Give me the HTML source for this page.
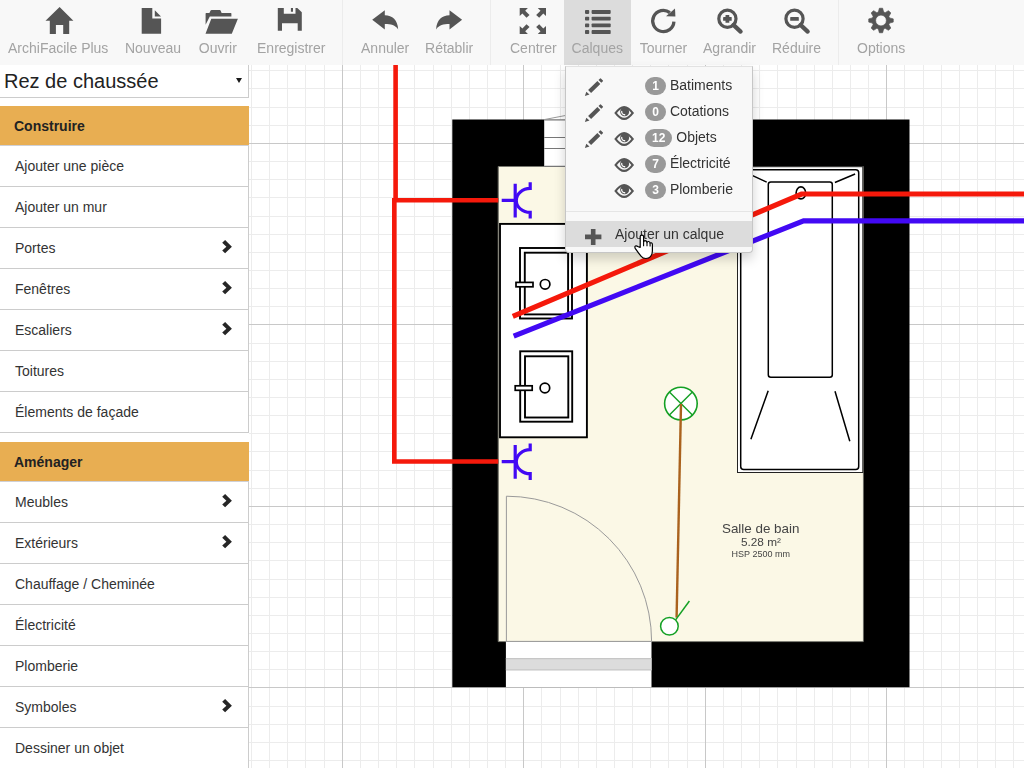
<!DOCTYPE html>
<html lang="fr"><head><meta charset="utf-8"><title>ArchiFacile Plus</title>
<style>
*{box-sizing:border-box}
html,body{margin:0;padding:0;width:1024px;height:768px;overflow:hidden;background:#fff;
 font-family:"Liberation Sans",Arial,sans-serif;font-size:14px;color:#333}
#canvas{position:absolute;left:0;top:0;width:1024px;height:768px;z-index:0}
#toolbar{position:absolute;left:0;top:0;width:1024px;height:65px;background:#f8f8f8;z-index:5}
.tb{position:absolute;top:0;height:65px;text-align:center;color:#a3a3a3;font-size:14px}
.tb span{position:absolute;left:0;right:0;top:39px;line-height:18px;white-space:nowrap}
.tb.active{background:#dcdcdc}
.sep{position:absolute;top:0;width:1px;height:65px;background:#ececec}
#tbicons{position:absolute;left:0;top:0;width:1024px;height:65px;z-index:6;pointer-events:none}
#sidebar{position:absolute;left:0;top:65px;width:249px;height:703px;background:#fff;z-index:4}
#floor{position:absolute;left:0;top:0;width:249px;height:33px;border-bottom:1px solid #ccc;border-right:1px solid #ccc;font-size:20px;line-height:32px;padding-left:4px;color:#222;white-space:nowrap}
#floor i{position:absolute;left:236px;top:13px;width:0;height:0;border-left:3px solid transparent;border-right:3px solid transparent;border-top:5.5px solid #1a1a1a}
.hd{position:absolute;left:0;width:249px;height:40px;background:#e8ae52;border-bottom:1px solid #cfd0d6;font-weight:bold;padding-left:14px;line-height:40px;color:#222}
.it{position:absolute;left:0;width:249px;height:41px;border-bottom:1px solid #ccc;border-right:1px solid #ccc;padding-left:15px;line-height:41px;color:#333;white-space:nowrap}
.it svg{position:absolute;left:222px;top:11.8px}
#dd{position:absolute;left:565px;top:66px;width:188px;height:187px;background:#f8f8f8;border:1px solid #c6c6c6;border-top-color:#e2e2e2;border-radius:0 0 4px 4px;box-shadow:0 6px 12px rgba(0,0,0,.175);z-index:7}
.row{position:absolute;left:0;width:186px;height:26px}
.row .badge{display:inline-block;vertical-align:middle;position:relative;top:0px;height:18px;min-width:21px;padding:0 7px;border-radius:10px;background:#999;color:#fff;font-weight:bold;font-size:12px;line-height:18px;text-align:center}
.row .nm{position:absolute;top:0;line-height:26px;color:#333;white-space:nowrap}
#ddline{position:absolute;left:0;top:144px;width:186px;height:1px;background:#e5e5e5}
#ddadd{position:absolute;left:0;top:154px;width:186px;height:26px;background:#dcdcdc}
#ddadd span{position:absolute;left:49px;top:0;line-height:26px;color:#333;white-space:nowrap}
#ddicons{position:absolute;left:0;top:0;width:186px;height:184px}
#canvas,.tb span,#dd .nm,#ddadd span{will-change:transform}
#cursor{position:absolute;left:633.2px;top:234.4px;z-index:9}
</style></head><body>

<svg id="canvas" width="1024" height="768" viewBox="0 0 1024 768">
<path d="M251.5 65V768M269.5 65V768M287.5 65V768M305.5 65V768M324.5 65V768M360.5 65V768M378.5 65V768M396.5 65V768M414.5 65V768M433.5 65V768M451.5 65V768M469.5 65V768M487.5 65V768M505.5 65V768M541.5 65V768M560.5 65V768M578.5 65V768M596.5 65V768M614.5 65V768M632.5 65V768M650.5 65V768M668.5 65V768M687.5 65V768M723.5 65V768M741.5 65V768M759.5 65V768M777.5 65V768M796.5 65V768M814.5 65V768M832.5 65V768M850.5 65V768M868.5 65V768M904.5 65V768M923.5 65V768M941.5 65V768M959.5 65V768M977.5 65V768M995.5 65V768M1013.5 65V768M249 70.5H1024M249 88.5H1024M249 107.5H1024M249 125.5H1024M249 161.5H1024M249 179.5H1024M249 197.5H1024M249 216.5H1024M249 234.5H1024M249 252.5H1024M249 270.5H1024M249 288.5H1024M249 306.5H1024M249 343.5H1024M249 361.5H1024M249 379.5H1024M249 397.5H1024M249 415.5H1024M249 433.5H1024M249 451.5H1024M249 470.5H1024M249 488.5H1024M249 524.5H1024M249 542.5H1024M249 560.5H1024M249 579.5H1024M249 597.5H1024M249 615.5H1024M249 633.5H1024M249 651.5H1024M249 669.5H1024M249 706.5H1024M249 724.5H1024M249 742.5H1024M249 760.5H1024" stroke="#ececec" stroke-width="1" fill="none"/>
<path d="M342.5 65V768M523.5 65V768M705.5 65V768M886.5 65V768M249 143.5H1024M249 324.5H1024M249 506.5H1024M249 687.5H1024" stroke="#c8c8c8" stroke-width="1" fill="none"/>
<!-- walls -->
<rect x="452.3" y="119.5" width="457.2" height="567.7" fill="#000"/>
<rect x="498.5" y="166.8" width="364.6" height="474.6" fill="#fbf8e6"/>
<path d="M498.2 166.5V641.6H863.4V166.5Z" fill="none" stroke="#8a8a80" stroke-width="0.8"/>
<!-- window in top wall -->
<rect x="544.2" y="119.5" width="207" height="47" fill="#fff"/>
<path d="M544.2 120H751M544.2 137.5H751M544.2 148.5H751M544.2 166.3H751" stroke="#777" stroke-width="1.2" fill="none"/>
<path d="M544.2 119.6L566 115.4" stroke="#999" stroke-width="1" fill="none"/>
<!-- door in bottom wall -->
<rect x="505.9" y="641.4" width="145.6" height="45.9" fill="#fff"/>
<rect x="505.9" y="658.3" width="145.6" height="11.8" fill="#dcdcdc"/>
<path d="M505.9 658.6H651.5M505.9 669.8H651.5" stroke="#c6c6c6" stroke-width="1.2"/>
<path d="M505.9 641.4H651.5" stroke="#999" stroke-width="1"/>
<path d="M506.4 641.4V496.2A145.2 145.2 0 0 1 651.6 641.4" fill="none" stroke="#9a9a9a" stroke-width="1"/>
<!-- vanity -->
<rect x="500" y="223.9" width="86.9" height="213.4" fill="#fff" stroke="#000" stroke-width="1.9"/>
<g fill="none" stroke="#000" stroke-width="1.9">
<rect x="520" y="248" width="52" height="70.5"/>
<rect x="524.8" y="252.7" width="43.3" height="61.7"/>
<rect x="520.2" y="351.3" width="52" height="70.4"/>
<rect x="525" y="356.3" width="43.3" height="61.2"/>
</g>
<g fill="#fff" stroke="#000" stroke-width="1.7">
<rect x="516" y="282.4" width="17" height="4.4"/>
<circle cx="545.1" cy="284.3" r="4.8"/>
<rect x="515.2" y="385.8" width="17" height="4.5"/>
<circle cx="544.9" cy="388" r="4.8"/>
</g>
<!-- bathtub -->
<rect x="737.5" y="166.7" width="125.3" height="305.8" fill="#fff" stroke="#222" stroke-width="1"/>
<rect x="740.7" y="169.8" width="118" height="299.8" rx="3" fill="none" stroke="#000" stroke-width="1.5"/>
<rect x="768.3" y="182" width="64" height="195.3" rx="2.5" fill="none" stroke="#000" stroke-width="1.5"/>
<path d="M752.1 175.4L766.7 182.1M834.9 182.5L855.1 174M768.2 390.8L750.9 439.2M835 391.3L849.8 441.3" stroke="#000" stroke-width="1.5" fill="none"/>
<ellipse cx="800.9" cy="192.9" rx="4.8" ry="6" fill="none" stroke="#000" stroke-width="1.6"/>
<!-- electric wires (red) -->
<path d="M395.6 65V200.3M394.3 198V461.5H498.3M392 200.3H498.3" fill="none" stroke="#f5190b" stroke-width="4.6" stroke-linejoin="miter"/>
<!-- sockets -->
<g fill="none" stroke="#4209f4" stroke-width="3.2">
<path d="M501.7 200.4H515.2M515.2 183.7V217.5"/>
<path d="M530.2 182.2V188.4A13.9 12 0 0 0 530.2 212.4V218.6" stroke-linejoin="miter"/>
</g>
<g fill="none" stroke="#4209f4" stroke-width="3.2" transform="translate(0,261.3)">
<path d="M501.7 200.4H515.2M515.2 183.7V217.5"/>
<path d="M530.2 182.2V188.4A13.9 12 0 0 0 530.2 212.4V218.6" stroke-linejoin="miter"/>
</g>
<!-- pipes -->
<path d="M512.8 316.3L801.5 194H1024" fill="none" stroke="#f5190b" stroke-width="5.2"/>
<path d="M513.7 336.1L803.6 220.9H1024" fill="none" stroke="#4209f4" stroke-width="5.2"/>
<!-- light + switch -->
<circle cx="680.9" cy="403.6" r="16.3" fill="#fff" stroke="#14a024" stroke-width="1.6"/>
<path d="M669.4 392.1L692.4 415.1M692.4 392.1L669.4 415.1" stroke="#14a024" stroke-width="1.4" fill="none"/>
<path d="M681 404L676.6 617.5" stroke="#aa621d" stroke-width="2.4" fill="none"/>
<circle cx="669.4" cy="626.2" r="8.8" fill="#fff" stroke="#14a024" stroke-width="1.5"/>
<path d="M675.6 619.9L689.4 601" stroke="#14a024" stroke-width="1.5" fill="none"/>
<!-- label -->
<g font-family="'Liberation Sans',Arial,sans-serif" fill="#444" text-anchor="middle">
<text x="760.7" y="532.5" font-size="13.4">Salle de bain</text>
<text x="760.9" y="545.5" font-size="11.8">5.28 m²</text>
<text x="760.8" y="556.6" font-size="9">HSP 2500 mm</text>
</g>

</svg>

<div id="toolbar">
<div class="tb" style="left:0.00px;width:116.4px"><span>ArchiFacile Plus</span></div>
<div class="tb" style="left:116.75px;width:72px"><span>Nouveau</span></div>
<div class="tb" style="left:188.40px;width:59.7px"><span>Ouvrir</span></div>
<div class="tb" style="left:248.75px;width:84.5px"><span>Enregistrer</span></div>
<div class="tb" style="left:353.25px;width:64.3px"><span>Annuler</span></div>
<div class="tb" style="left:417.45px;width:64.3px"><span>Rétablir</span></div>
<div class="tb" style="left:501.75px;width:62.7px"><span>Centrer</span></div>
<div class="tb active" style="left:564.30px;width:66.6px"><span>Calques</span></div>
<div class="tb" style="left:631.00px;width:65px"><span>Tourner</span></div>
<div class="tb" style="left:694.75px;width:69px"><span>Agrandir</span></div>
<div class="tb" style="left:764.00px;width:65px"><span>Réduire</span></div>
<div class="tb" style="left:848.85px;width:64.3px"><span>Options</span></div>
<div class="sep" style="left:342px"></div>
<div class="sep" style="left:490px"></div>
<div class="sep" style="left:838px"></div>
</div>
<svg id="tbicons" width="1024" height="65" viewBox="0 0 1024 65" fill="#555">
<path d="M59.6 6.9L73.4 20.8H45.5Z M49.8 20.7H69.2V33.9H63.2V24.9H55.9V33.9H49.8Z"/>
<path d="M141.7 8H152.3V18.5H161.1V33.8H141.7Z M154.8 10.3L161 16.4H154.8Z"/>
<path d="M205.6 13.6Q205.6 13 206.2 13H209.4L210.6 10.6Q210.9 10 211.6 10H219.6Q220.3 10 220.6 10.6L221.6 13H230.8Q231.4 13 231.4 13.6V16.4H209.8L205.6 24.8Z M211.3 18.7H237.9L231.8 33.8H205.5Z"/>
<path fill-rule="evenodd" d="M277.8 8H297.3L301.8 12.3V30.8H277.8Z M283.8 8H295.5V13.8H283.8Z M282 23.2H297.7V30.8H282Z M290.9 8H293V11.7H290.9Z"/>
<path d="M372.2 19.8L384.8 10.2V15.3C392.5 15.3 397.6 20 398.2 29.4C395.2 25.2 391 24.1 384.8 24.1V29.4Z"/>
<path d="M372.2 19.8L384.8 10.2V15.3C392.5 15.3 397.6 20 398.2 29.4C395.2 25.2 391 24.1 384.8 24.1V29.4Z" transform="translate(834.3,0) scale(-1,1)"/>
<path d="M0 0H8.2L5.5 2.7L9.85 6.9L6.8 9.7L2.7 5.5L0 8Z" transform="translate(519.7,8) scale(1,1)"/>
<path d="M0 0H8.2L5.5 2.7L9.85 6.9L6.8 9.7L2.7 5.5L0 8Z" transform="translate(546,8) scale(-1,1)"/>
<path d="M0 0H8.2L5.5 2.7L9.85 6.9L6.8 9.7L2.7 5.5L0 8Z" transform="translate(519.7,34) scale(1,-1)"/>
<path d="M0 0H8.2L5.5 2.7L9.85 6.9L6.8 9.7L2.7 5.5L0 8Z" transform="translate(546,34) scale(-1,-1)"/>
<rect x="585" y="10" width="4.2" height="3.9" rx="0.8"/><rect x="591.6" y="10" width="19.1" height="3.9" rx="0.8"/>
<rect x="585" y="16.7" width="4.2" height="3.9" rx="0.8"/><rect x="591.6" y="16.7" width="19.1" height="3.9" rx="0.8"/>
<rect x="585" y="23.4" width="4.2" height="3.9" rx="0.8"/><rect x="591.6" y="23.4" width="19.1" height="3.9" rx="0.8"/>
<rect x="585" y="30.1" width="4.2" height="3.9" rx="0.8"/><rect x="591.6" y="30.1" width="19.1" height="3.9" rx="0.8"/>
<path d="M673.9 21.6A10.6 10.6 0 1 1 669.83 12.65" fill="none" stroke="#555" stroke-width="3.3"/>
<path d="M675 8.5L675.4 16.6L666 16.2Z"/>
<circle cx="727.4" cy="18.8" r="8.6" fill="none" stroke="#555" stroke-width="3.2"/>
<path d="M733.4 24.9L740.6 31.6" stroke="#555" stroke-width="4.2" stroke-linecap="round" fill="none"/>
<rect x="723.1" y="17.0" width="8.6" height="3.8" rx="0.4"/>
<rect x="725.5" y="14.9" width="3.8" height="7.9" rx="0.4"/>
<circle cx="794.5" cy="18.8" r="8.6" fill="none" stroke="#555" stroke-width="3.2"/>
<path d="M800.5 24.9L807.7 31.6" stroke="#555" stroke-width="4.2" stroke-linecap="round" fill="none"/>
<rect x="790.2" y="17.0" width="8.6" height="3.8" rx="0.4"/>
<path fill-rule="evenodd" d="M878.40 11.99L879.39 8.26L882.61 8.26L883.60 11.99L885.18 12.64L888.52 10.70L890.80 12.98L888.86 16.32L889.51 17.90L893.24 18.89L893.24 22.11L889.51 23.10L888.86 24.68L890.80 28.02L888.52 30.30L885.18 28.36L883.60 29.01L882.61 32.74L879.39 32.74L878.40 29.01L876.82 28.36L873.48 30.30L871.20 28.02L873.14 24.68L872.49 23.10L868.76 22.11L868.76 18.89L872.49 17.90L873.14 16.32L871.20 12.98L873.48 10.70L876.82 12.64Z M886.4 20.5A5.4 5.4 0 1 0 875.6 20.5A5.4 5.4 0 1 0 886.4 20.5Z" stroke="#555" stroke-width="0.7" stroke-linejoin="round"/>
</svg>

<div id="sidebar">
<div id="floor">Rez de chaussée<i></i></div>
<div class="hd" style="top:41px">Construire</div>
<div class="it" style="top:81px">Ajouter une pièce</div>
<div class="it" style="top:122px">Ajouter un mur</div>
<div class="it" style="top:163px">Portes<svg width="11" height="14" viewBox="0 0 11 14"><path d="M3.1 0L9.9 6.65L3.1 13.3L0.2 10.6L4.4 6.65L0.2 2.7Z" fill="#262626"/></svg></div>
<div class="it" style="top:204px">Fenêtres<svg width="11" height="14" viewBox="0 0 11 14"><path d="M3.1 0L9.9 6.65L3.1 13.3L0.2 10.6L4.4 6.65L0.2 2.7Z" fill="#262626"/></svg></div>
<div class="it" style="top:245px">Escaliers<svg width="11" height="14" viewBox="0 0 11 14"><path d="M3.1 0L9.9 6.65L3.1 13.3L0.2 10.6L4.4 6.65L0.2 2.7Z" fill="#262626"/></svg></div>
<div class="it" style="top:286px">Toitures</div>
<div class="it" style="top:327px">Élements de façade</div>
<div class="hd" style="top:377px">Aménager</div>
<div class="it" style="top:417px">Meubles<svg width="11" height="14" viewBox="0 0 11 14"><path d="M3.1 0L9.9 6.65L3.1 13.3L0.2 10.6L4.4 6.65L0.2 2.7Z" fill="#262626"/></svg></div>
<div class="it" style="top:458px">Extérieurs<svg width="11" height="14" viewBox="0 0 11 14"><path d="M3.1 0L9.9 6.65L3.1 13.3L0.2 10.6L4.4 6.65L0.2 2.7Z" fill="#262626"/></svg></div>
<div class="it" style="top:499px">Chauffage / Cheminée</div>
<div class="it" style="top:540px">Électricité</div>
<div class="it" style="top:581px">Plomberie</div>
<div class="it" style="top:622px">Symboles<svg width="11" height="14" viewBox="0 0 11 14"><path d="M3.1 0L9.9 6.65L3.1 13.3L0.2 10.6L4.4 6.65L0.2 2.7Z" fill="#262626"/></svg></div>
<div class="it" style="top:663px">Dessiner un objet</div>
</div>

<div id="dd">
<div class="row" style="top:5px"><span class="nm" style="left:79px"><b class="badge">1</b> Batiments</span></div>
<div class="row" style="top:31px"><span class="nm" style="left:79px"><b class="badge">0</b> Cotations</span></div>
<div class="row" style="top:57px"><span class="nm" style="left:79px"><b class="badge">12</b> Objets</span></div>
<div class="row" style="top:83px"><span class="nm" style="left:79px"><b class="badge">7</b> Électricité</span></div>
<div class="row" style="top:109px"><span class="nm" style="left:79px"><b class="badge">3</b> Plomberie</span></div>
<div id="ddline"></div>
<div id="ddadd"><span>Ajouter un calque</span></div>
<svg id="ddicons" width="186" height="184" viewBox="0 0 186 184" fill="#555">
<g transform="translate(18.799999999999955,11.1)"><path d="M0.1 17.9L1.5 13.7L4.7 16.4Z M3.3 12L12.6 3L15.5 5.9L6.3 14.9Z M13.7 1.9L15.3 0.3Q15.7 0 16.1 0.4L18.1 2.4Q18.5 2.8 18.1 3.2L16.5 4.7Z"/></g>
<g transform="translate(18.799999999999955,37.1)"><path d="M0.1 17.9L1.5 13.7L4.7 16.4Z M3.3 12L12.6 3L15.5 5.9L6.3 14.9Z M13.7 1.9L15.3 0.3Q15.7 0 16.1 0.4L18.1 2.4Q18.5 2.8 18.1 3.2L16.5 4.7Z"/></g>
<g transform="translate(58.14999999999998,46)"><path fill-rule="evenodd" d="M-9.9 0C-6.5 -4.7 -3 -7.1 0 -7.1C3 -7.1 6.5 -4.7 9.9 0C6.5 4.7 3 7.1 0 7.1C-3 7.1 -6.5 4.7 -9.9 0ZM-7.2 0C-5 3.1 -2.4 4.8 0 4.8C2.4 4.8 5 3.1 7.2 0C5 -3.1 2.4 -4.8 0 -4.8C-2.4 -4.8 -5 -3.1 -7.2 0Z"/><circle cx="0.5" cy="-1.2" r="4.5"/><path d="M-2.4 -2A3 3 0 0 0 1.1 1.7" fill="none" stroke="#f8f8f8" stroke-width="1.3"/></g>
<g transform="translate(18.799999999999955,63.1)"><path d="M0.1 17.9L1.5 13.7L4.7 16.4Z M3.3 12L12.6 3L15.5 5.9L6.3 14.9Z M13.7 1.9L15.3 0.3Q15.7 0 16.1 0.4L18.1 2.4Q18.5 2.8 18.1 3.2L16.5 4.7Z"/></g>
<g transform="translate(58.14999999999998,72)"><path fill-rule="evenodd" d="M-9.9 0C-6.5 -4.7 -3 -7.1 0 -7.1C3 -7.1 6.5 -4.7 9.9 0C6.5 4.7 3 7.1 0 7.1C-3 7.1 -6.5 4.7 -9.9 0ZM-7.2 0C-5 3.1 -2.4 4.8 0 4.8C2.4 4.8 5 3.1 7.2 0C5 -3.1 2.4 -4.8 0 -4.8C-2.4 -4.8 -5 -3.1 -7.2 0Z"/><circle cx="0.5" cy="-1.2" r="4.5"/><path d="M-2.4 -2A3 3 0 0 0 1.1 1.7" fill="none" stroke="#f8f8f8" stroke-width="1.3"/></g>
<g transform="translate(58.14999999999998,98)"><path fill-rule="evenodd" d="M-9.9 0C-6.5 -4.7 -3 -7.1 0 -7.1C3 -7.1 6.5 -4.7 9.9 0C6.5 4.7 3 7.1 0 7.1C-3 7.1 -6.5 4.7 -9.9 0ZM-7.2 0C-5 3.1 -2.4 4.8 0 4.8C2.4 4.8 5 3.1 7.2 0C5 -3.1 2.4 -4.8 0 -4.8C-2.4 -4.8 -5 -3.1 -7.2 0Z"/><circle cx="0.5" cy="-1.2" r="4.5"/><path d="M-2.4 -2A3 3 0 0 0 1.1 1.7" fill="none" stroke="#f8f8f8" stroke-width="1.3"/></g>
<g transform="translate(58.14999999999998,124)"><path fill-rule="evenodd" d="M-9.9 0C-6.5 -4.7 -3 -7.1 0 -7.1C3 -7.1 6.5 -4.7 9.9 0C6.5 4.7 3 7.1 0 7.1C-3 7.1 -6.5 4.7 -9.9 0ZM-7.2 0C-5 3.1 -2.4 4.8 0 4.8C2.4 4.8 5 3.1 7.2 0C5 -3.1 2.4 -4.8 0 -4.8C-2.4 -4.8 -5 -3.1 -7.2 0Z"/><circle cx="0.5" cy="-1.2" r="4.5"/><path d="M-2.4 -2A3 3 0 0 0 1.1 1.7" fill="none" stroke="#f8f8f8" stroke-width="1.3"/></g>
<path d="M19.000000000000046 167.6H24.900000000000045V161.9H29.500000000000046V167.6H35.40000000000005V172.20000000000002H29.500000000000046V177.9H24.900000000000045V172.20000000000002H19.000000000000046Z"/>
</svg>
</div>

<svg id="cursor" width="22" height="26" viewBox="0 0 22 26"><path d="M7.2 13.4V2.6Q7.2 1.1 8.9 1.1Q10.6 1.1 10.6 2.6V8.2Q10.7 6.6 12.3 6.6Q13.9 6.7 14 8.6Q14.2 7.4 15.6 7.5Q17 7.6 17.1 9.4Q17.4 8.6 18.4 8.8Q19.4 9 19.4 10.6V17Q19.4 20.5 17.5 22.6Q15.8 24.5 12.9 24.5Q10 24.5 8.2 22.3Q5 18.5 2.2 14.4Q1.3 12.9 2.4 12.1Q3.5 11.4 4.7 12.5Z" fill="#fff" stroke="#000" stroke-width="1.2" stroke-linejoin="round"/><path d="M10.6 8.2V12.2M14 8.6V12.2M17.1 9.6V12.4" stroke="#000" stroke-width="1.1" fill="none"/></svg>
</body></html>
